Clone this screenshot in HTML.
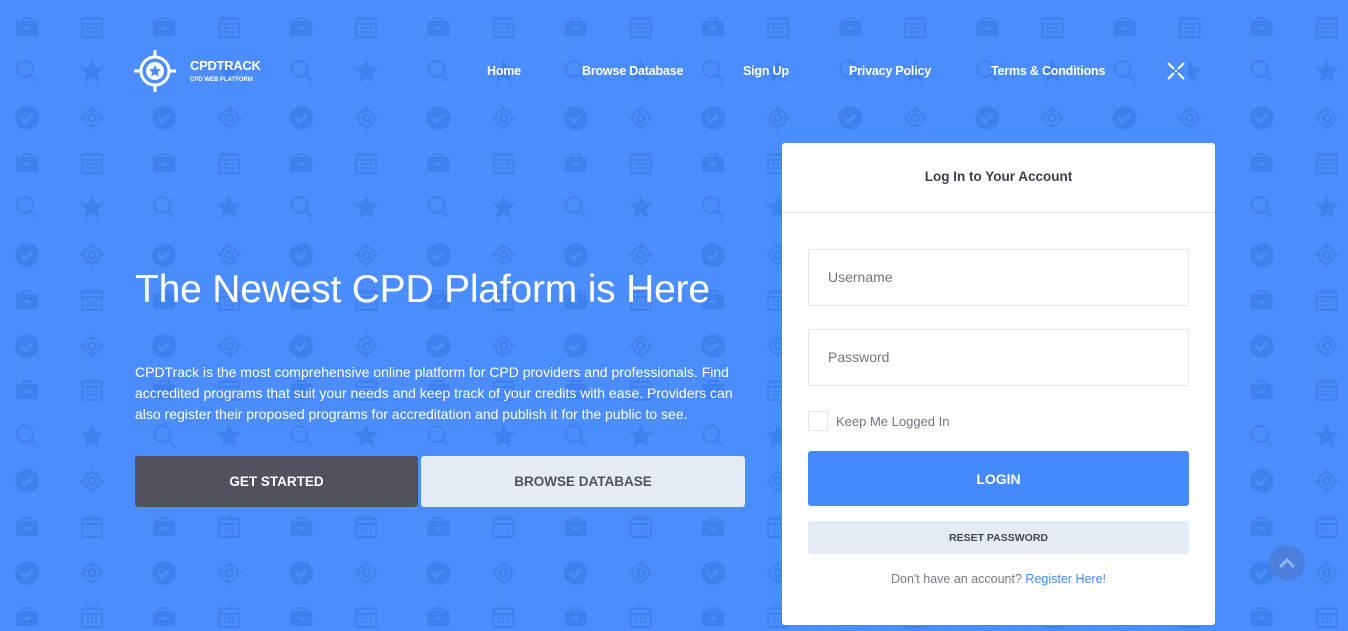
<!DOCTYPE html>
<html><head><meta charset="utf-8"><style>
*{margin:0;padding:0;box-sizing:border-box}
body{width:1348px;height:631px;overflow:hidden;background:#4b8dfc;font-family:"Liberation Sans",sans-serif;position:relative}
#bg{position:absolute;left:0;top:0}
.abs{position:absolute}
.nav a{position:absolute;top:64px;color:#fff;font-weight:bold;font-size:12.5px;text-decoration:none;white-space:nowrap;letter-spacing:-0.2px}
h1{position:absolute;left:135px;top:268px;font-size:39px;font-weight:normal;color:#fff;letter-spacing:-0.2px;white-space:nowrap}
p.lead{position:absolute;left:135px;top:362px;width:615px;font-size:14px;line-height:21px;color:#fff}
.btn{position:absolute;display:flex;align-items:center;justify-content:center;font-weight:bold;border-radius:3px}
.card{position:absolute;left:782px;top:143px;width:433px;height:482px;background:#fff;border-radius:3px}
.inp{position:absolute;left:26px;width:381px;height:57px;border:1px solid #e1e6ee;border-radius:2px;font-size:14px;color:#6f7480;padding:19px 0 0 19px}
</style></head><body>
<svg id="bg" width="1348" height="631">
<defs>
<g id="brief"><rect x="-11" y="-6" width="22" height="15" rx="2"/><path d="M-5 -6v-4h10v4h-2v-2h-6v2z"/><rect x="-3" y="0" width="6" height="3" fill="#4b8dfc"/></g>
<g id="cal" fill="none" stroke-width="2"><rect x="-10" y="-8" width="20" height="18" rx="1"/><path d="M-10 -3h20M-6 -11v4M-2 -11v4M2 -11v4M6 -11v4"/><path d="M-5 1h2M-1 1h2M3 1h2M-5 5h2M-1 5h2M3 5h2" stroke-width="2.5"/></g>
<g id="srch" fill="none" stroke-width="2"><circle cx="-2" cy="-2" r="8"/><path d="M4 4l6 6"/></g>
<path id="star" d="M0,-12 L3.5,-4 L12,-3.5 L5.5,2.5 L7.5,11 L0,6.5 L-7.5,11 L-5.5,2.5 L-12,-3.5 L-3.5,-4Z"/>
<g id="chk"><circle r="12"/><path d="M-6 0l4 4 7-7" fill="none" stroke="#4b8dfc" stroke-width="3"/></g>
<g id="tgt" fill="none" stroke-width="2"><circle r="8"/><circle r="3.5" stroke-width="3"/><path d="M0 -12v4M0 8v4M-12 0h4M8 0h4"/></g>
<pattern id="pB" patternUnits="userSpaceOnUse" x="-18" y="-20" width="137.2" height="40"><g fill="#3f80ef" transform="translate(45,20)"><use href="#brief"/></g><g stroke="#3f80ef" transform="translate(110,20)"><use href="#cal"/></g></pattern>
<pattern id="pS" patternUnits="userSpaceOnUse" x="-18" y="-20" width="137.2" height="40"><g stroke="#3f80ef" transform="translate(45,20)"><use href="#srch"/></g><g fill="#3f80ef" transform="translate(110,20)"><use href="#star"/></g></pattern>
<pattern id="pC" patternUnits="userSpaceOnUse" x="-18" y="-20" width="137.2" height="40"><g fill="#3f80ef" transform="translate(45,20)"><use href="#chk"/></g><g stroke="#3f80ef" transform="translate(110,20)"><use href="#tgt"/></g></pattern>
</defs>
<g transform="translate(0,27)"><rect y="-20" width="1348" height="40" fill="url(#pB)"/></g>
<g transform="translate(0,71)"><rect y="-20" width="1348" height="40" fill="url(#pS)"/></g>
<g transform="translate(0,118)"><rect y="-20" width="1348" height="40" fill="url(#pC)"/></g>
<g transform="translate(0,163)"><rect y="-20" width="1348" height="40" fill="url(#pB)"/></g>
<g transform="translate(0,207)"><rect y="-20" width="1348" height="40" fill="url(#pS)"/></g>
<g transform="translate(0,255)"><rect y="-20" width="1348" height="40" fill="url(#pC)"/></g>
<g transform="translate(0,300)"><rect y="-20" width="1348" height="40" fill="url(#pB)"/></g>
<g transform="translate(0,346)"><rect y="-20" width="1348" height="40" fill="url(#pC)"/></g>
<g transform="translate(0,390)"><rect y="-20" width="1348" height="40" fill="url(#pB)"/></g>
<g transform="translate(0,436)"><rect y="-20" width="1348" height="40" fill="url(#pS)"/></g>
<g transform="translate(0,481)"><rect y="-20" width="1348" height="40" fill="url(#pC)"/></g>
<g transform="translate(0,527)"><rect y="-20" width="1348" height="40" fill="url(#pB)"/></g>
<g transform="translate(0,573)"><rect y="-20" width="1348" height="40" fill="url(#pC)"/></g>
<g transform="translate(0,617)"><rect y="-20" width="1348" height="40" fill="url(#pB)"/></g>
<g transform="translate(155,71)">
<rect x="-22" y="-22" width="44" height="44" fill="#4b8dfc"/>
<circle r="14" fill="none" stroke="#fff" stroke-width="3"/>
<circle r="9" fill="#fff"/>
<path d="M0,-6 L1.8,-2 L6,-1.8 L2.8,1.2 L3.8,5.5 L0,3.2 L-3.8,5.5 L-2.8,1.2 L-6,-1.8 L-1.8,-2Z" fill="#4b8dfc"/>
<path d="M0 -21v7M0 14v7M-21 0h7M14 0h7" stroke="#fff" stroke-width="3"/>
</g>
<g transform="translate(1176,71)" stroke="#fff" stroke-width="2"><rect x="-12" y="-12" width="24" height="24" fill="#4b8dfc" stroke="none"/><path d="M-8 -8l6 6M8 -8l-6 6M-8 8l6 -6M8 8l-6 -6"/><rect x="-1" y="-1" width="2" height="2" fill="#fff" stroke="none"/></g>
<circle cx="1287" cy="563" r="18" fill="#4a7fdf"/>
<path d="M1280 567l7-7 7 7" fill="none" stroke="#8fb3f0" stroke-width="3"/>
</svg>
<div class="abs" style="left:190px;top:58px;color:#fff;font-weight:bold;font-size:13px;letter-spacing:-0.3px">CPDTRACK</div>
<div class="abs" style="left:190px;top:77px;color:#fff;font-weight:bold;font-size:6px">CPD WEB PLATFORM</div>
<div class="nav">
<a style="left:487px">Home</a><a style="left:582px">Browse Database</a><a style="left:743px">Sign Up</a><a style="left:849px">Privacy Policy</a><a style="left:991px">Terms &amp; Conditions</a>
</div>
<h1>The Newest CPD Plaform is Here</h1>
<p class="lead">CPDTrack is the most comprehensive online platform for CPD providers and professionals. Find accredited programs that suit your needs and keep track of your credits with ease. Providers can also register their proposed programs for accreditation and publish it for the public to see.</p>
<div class="btn" style="left:135px;top:456px;width:283px;height:51px;background:#52525f;color:#fff;font-size:13.5px">GET STARTED</div>
<div class="btn" style="left:421px;top:456px;width:324px;height:51px;background:#e4ebf5;color:#52525f;font-size:13.5px">BROWSE DATABASE</div>
<div class="card">
<div style="height:70px;border-bottom:1px solid #e6e9ef;text-align:center;padding-top:26px;font-size:13.5px;font-weight:bold;color:#3c3f48">Log In to Your Account</div>
<div class="inp" style="top:106px">Username</div>
<div class="inp" style="top:186px">Password</div>
<div class="abs" style="left:26px;top:268px;width:20px;height:20px;border:1px solid #e1e6ee"></div>
<div class="abs" style="left:54px;top:271px;font-size:13px;color:#6f7480">Keep Me Logged In</div>
<div class="btn" style="left:26px;top:308px;width:381px;height:55px;background:#448afd;color:#fff;font-size:14px">LOGIN</div>
<div class="btn" style="left:26px;top:378px;width:381px;height:33px;background:#e4ebf5;color:#444650;font-size:10.5px">RESET PASSWORD</div>
<div class="abs" style="left:0;width:433px;top:429px;text-align:center;font-size:12.5px;color:#777b85">Don't have an account? <span style="color:#448afd">Register Here!</span></div>
</div>
</body></html>
